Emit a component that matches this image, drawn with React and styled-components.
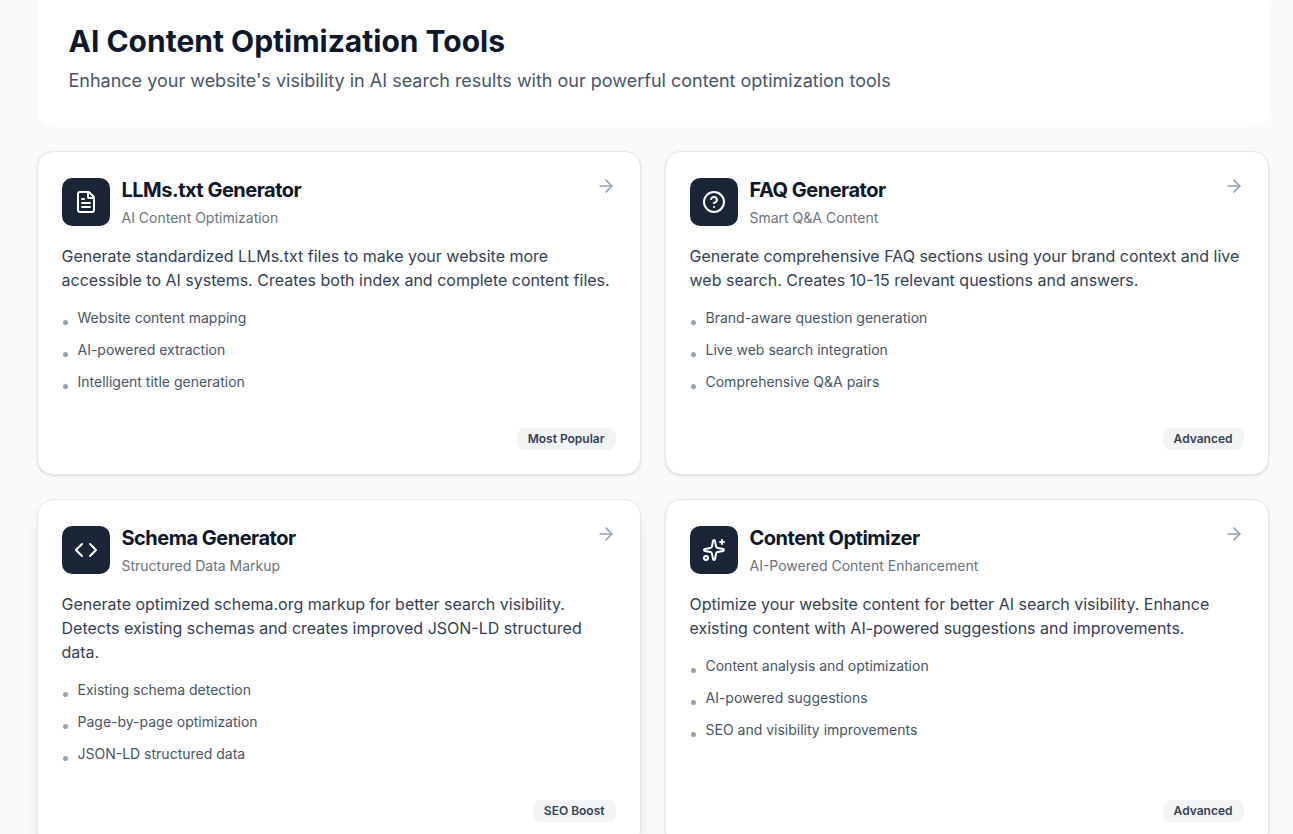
import React from 'react';
import styled, { createGlobalStyle } from 'styled-components';
import {
  ArrowRight,
  CircleHelp,
  Code,
  FileText,
  Sparkles,
} from 'lucide-react';

const GlobalStyle = createGlobalStyle`
  * {
    box-sizing: border-box;
  }
  body {
    margin: 0;
    height: 834px;
    overflow: hidden;
    background: #fafafa;
    font-family: Inter, 'Liberation Sans', sans-serif;
    color: #0f172a;
    -webkit-font-smoothing: antialiased;
  }
  h1, h2, p, ul {
    margin: 0;
    padding: 0;
  }
`;

const Page = styled.main`
  height: 834px;
  overflow: hidden;
  padding: 0 24.5px 0 36.5px;
`;

const Banner = styled.header`
  margin-top: -9px;
  padding: 32px;
  background: #ffffff;
  border-radius: 16px;
`;

const BannerTitle = styled.h1`
  font-size: 30px;
  line-height: 36px;
  font-weight: 700;
`;

const BannerText = styled.p`
  margin-top: 8px;
  font-size: 18px;
  line-height: 28px;
  color: #475569;
`;

const CardGrid = styled.section`
  display: grid;
  grid-template-columns: 1fr 1fr;
  gap: 24px;
  margin-top: 24px;
`;

const Card = styled.article`
  display: flex;
  flex-direction: column;
  padding: 24px;
  background: #ffffff;
  border: 1px solid #e5e7eb;
  border-radius: 16px;
  box-shadow: ${({ $raised }) =>
    $raised
      ? '0 10px 15px -3px rgba(0, 0, 0, 0.1), 0 4px 6px -4px rgba(0, 0, 0, 0.1)'
      : '0 1px 3px rgba(0, 0, 0, 0.1), 0 1px 2px -1px rgba(0, 0, 0, 0.1)'};
`;

const CardHeader = styled.div`
  display: flex;
  align-items: flex-start;
  justify-content: space-between;
  color: #94a3b8;
`;

const CardHeading = styled.div`
  display: flex;
  align-items: center;
  gap: 12px;
`;

const IconBox = styled.div`
  display: flex;
  align-items: center;
  justify-content: center;
  width: 48px;
  height: 48px;
  border-radius: 10px;
  background: #1a2637;
  color: #ffffff;
`;

const CardTitle = styled.h2`
  font-size: 20px;
  line-height: 28px;
  font-weight: 700;
  letter-spacing: -0.025em;
  color: #0f172a;
`;

const CardSubtitle = styled.p`
  margin-top: 4px;
  font-size: 14px;
  line-height: 20px;
  color: #6b7280;
`;

const Description = styled.p`
  margin-top: 16px;
  font-size: 16px;
  line-height: 24px;
  color: #334155;
`;

const FeatureList = styled.ul`
  display: flex;
  flex-direction: column;
  gap: 12px;
  margin: 16px 0 36px;
  list-style: none;
`;

const Feature = styled.li`
  display: flex;
  align-items: flex-start;
  gap: 9.5px;
  font-size: 14px;
  line-height: 20px;
  color: #475569;

  &::before {
    content: '';
    width: 5px;
    height: 5px;
    margin: 12px 0 0 1.5px;
    border-radius: 50%;
    background: #94a3b8;
  }
`;

const Badge = styled.span`
  align-self: flex-end;
  margin-top: auto;
  padding: 3px 11px;
  border-radius: 8px;
  background: #f3f4f6;
  font-size: 12px;
  line-height: 16px;
  font-weight: 600;
  color: #334155;
`;

const tools = [
  {
    title: 'LLMs.txt Generator',
    subtitle: 'AI Content Optimization',
    icon: FileText,
    description:
      'Generate standardized LLMs.txt files to make your website more accessible to AI systems. Creates both index and complete content files.',
    features: [
      'Website content mapping',
      'AI-powered extraction',
      'Intelligent title generation',
    ],
    badge: 'Most Popular',
  },
  {
    title: 'FAQ Generator',
    subtitle: 'Smart Q&A Content',
    icon: CircleHelp,
    description:
      'Generate comprehensive FAQ sections using your brand context and live web search. Creates 10-15 relevant questions and answers.',
    features: [
      'Brand-aware question generation',
      'Live web search integration',
      'Comprehensive Q&A pairs',
    ],
    badge: 'Advanced',
  },
  {
    title: 'Schema Generator',
    subtitle: 'Structured Data Markup',
    icon: Code,
    description:
      'Generate optimized schema.org markup for better search visibility. Detects existing schemas and creates improved JSON-LD structured data.',
    features: [
      'Existing schema detection',
      'Page-by-page optimization',
      'JSON-LD structured data',
    ],
    badge: 'SEO Boost',
    raised: true,
  },
  {
    title: 'Content Optimizer',
    subtitle: 'AI-Powered Content Enhancement',
    icon: Sparkles,
    description:
      'Optimize your website content for better AI search visibility. Enhance existing content with AI-powered suggestions and improvements.',
    features: [
      'Content analysis and optimization',
      'AI-powered suggestions',
      'SEO and visibility improvements',
    ],
    badge: 'Advanced',
  },
];

const ToolCard = ({ tool }) => {
  const Icon = tool.icon;
  return (
    <Card $raised={tool.raised}>
      <CardHeader>
        <CardHeading>
          <IconBox>
            <Icon size={24} />
          </IconBox>
          <div>
            <CardTitle>{tool.title}</CardTitle>
            <CardSubtitle>{tool.subtitle}</CardSubtitle>
          </div>
        </CardHeading>
        <ArrowRight size={20} />
      </CardHeader>
      <Description>{tool.description}</Description>
      <FeatureList>
        {tool.features.map((feature) => (
          <Feature key={feature}>{feature}</Feature>
        ))}
      </FeatureList>
      <Badge>{tool.badge}</Badge>
    </Card>
  );
};

const App = () => {
  return (
    <>
      <GlobalStyle />
      <Page>
        <Banner>
          <BannerTitle>AI Content Optimization Tools</BannerTitle>
          <BannerText>
            Enhance your website's visibility in AI search results with our
            powerful content optimization tools
          </BannerText>
        </Banner>
        <CardGrid>
          {tools.map((tool) => (
            <ToolCard key={tool.title} tool={tool} />
          ))}
        </CardGrid>
      </Page>
    </>
  );
};

export default App;
